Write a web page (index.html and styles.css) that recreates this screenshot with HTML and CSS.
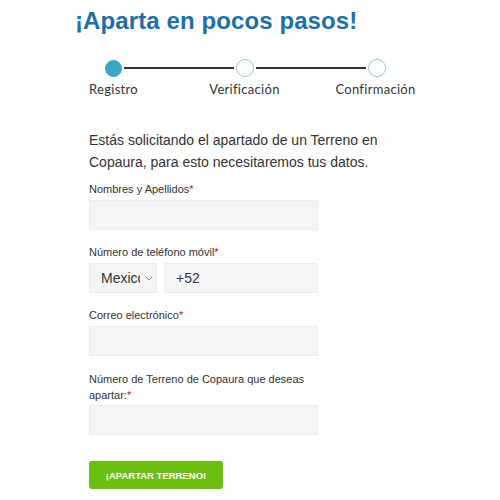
FILE: index.html
```html
<!DOCTYPE html>
<html lang="es">
<head>
<meta charset="utf-8">
<title>Aparta en pocos pasos</title>
<link rel="stylesheet" href="styles.css">
</head>
<body>
<main class="page">
  <h1 class="title">¡Aparta en pocos pasos!</h1>

  <div class="stepper">
    <div class="track">
      <span class="dot dot-active"></span>
      <span class="line"></span>
      <span class="dot"></span>
      <span class="line"></span>
      <span class="dot"></span>
    </div>
    <div class="step-labels">
      <span>Registro</span>
      <span>Verificación</span>
      <span>Confirmación</span>
    </div>
  </div>

  <form class="form">
    <p class="intro">Estás solicitando el apartado de un Terreno en Copaura, para esto necesitaremos tus datos.</p>

    <div class="field">
      <label class="label">Nombres y Apellidos<span class="req">*</span></label>
      <div class="input"></div>
    </div>

    <div class="field">
      <label class="label">Número de teléfono móvil<span class="req">*</span></label>
      <div class="phone">
        <div class="input select"><span class="select-text">Mexico</span><svg class="chev" width="8" height="5" viewBox="0 0 8 5"><path d="M0.8 0.8L4 4L7.2 0.8" fill="none" stroke="#8a8a8a" stroke-width="1"/></svg></div>
        <div class="input prefix">+52</div>
      </div>
    </div>

    <div class="field">
      <label class="label">Correo electrónico<span class="req">*</span></label>
      <div class="input"></div>
    </div>

    <div class="field">
      <label class="label label-wrap">Número de Terreno de Copaura que deseas apartar:<span class="req">*</span></label>
      <div class="input"></div>
    </div>

    <button type="button" class="btn">¡APARTAR TERRENO!</button>
  </form>
</main>
</body>
</html>
```

FILE: styles.css
```css
* { box-sizing: border-box; }
html, body { margin: 0; padding: 0; background: #ffffff; }
body { font-family: "Liberation Sans", Arial, sans-serif; color: #333333; }

.page { width: 500px; padding-top: 6px; }

.title {
  margin: 0 0 0 75px;
  font-size: 24px;
  line-height: 30px;
  font-weight: 700;
  color: #1f6fa7;
  letter-spacing: 0.1px;
}

.stepper { margin-top: 23px; }
.track {
  display: flex;
  align-items: center;
  margin-left: 105px;
  width: 281px;
  height: 18px;
}
.dot {
  flex: none;
  width: 18px;
  height: 18px;
  border-radius: 50%;
  border: 1.5px solid #8fcbd6;
  background: #ffffff;
}
.dot-active {
  width: 17px;
  height: 17px;
  background: #3ba6c3;
  border-color: #3ba6c3;
}
.line {
  flex: 1;
  height: 2px;
  background: #2f3336;
  margin: 0 2px;
}
.step-labels {
  display: grid;
  grid-template-columns: 131px 131px 131px;
  margin-left: 48px;
  margin-top: 4px;
  font-family: "Lato", "Noto Sans", sans-serif;
  font-size: 13px;
  line-height: 16px;
  color: #333333;
  letter-spacing: 0.3px;
}
.step-labels span { text-align: center; }

.form {
  margin-left: 89px;
  width: 300px;
  margin-top: 32px;
  display: flex;
  flex-direction: column;
}
.intro {
  margin: 0 0 9px;
  font-size: 14px;
  line-height: 22px;
  width: 310px;
  color: #333333;
}
.field { display: flex; flex-direction: column; margin-bottom: 15px; width: 229px; }
.label {
  font-size: 11px;
  line-height: 14px;
  color: #333333;
  margin-bottom: 4px;
}
.label-wrap { line-height: 16px; width: 250px; margin-bottom: 2px; }
.req { color: #d0021b; }

.input {
  height: 30px;
  background: #f4f5f7;
  border: 1px solid #eaecef;
  border-radius: 1px;
  font-size: 14px;
  color: #333333;
  display: flex;
  align-items: center;
}
.phone { display: flex; gap: 7px; }
.select { width: 68px; padding-left: 11px; padding-right: 5px; gap: 5px; }
.select-text { width: 39px; overflow: hidden; white-space: nowrap; flex: none; }
.chev { flex: none; }
.prefix { flex: 1; padding-left: 11px; }

.btn {
  margin-top: 11px;
  width: 134px;
  height: 28px;
  background: #6cbf12;
  border: none;
  border-radius: 3px;
  color: #ffffff;
  font-family: "Liberation Sans", Arial, sans-serif;
  font-weight: 700;
  font-size: 9.5px;
  padding: 0;
  cursor: pointer;
}
```
